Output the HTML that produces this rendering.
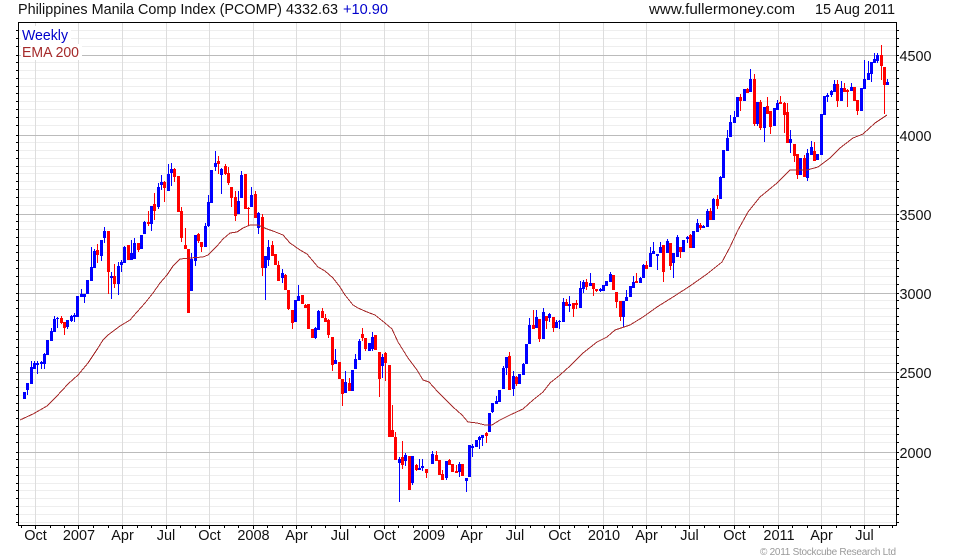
<!DOCTYPE html>
<html>
<head>
<meta charset="utf-8">
<style>
html,body{margin:0;padding:0;background:#fff;width:980px;height:560px;overflow:hidden}
svg{display:block}
text{font-family:"Liberation Sans",Arial,sans-serif;font-size:14.5px;fill:#111}
.c{shape-rendering:crispEdges;fill:none}
.m{text-anchor:middle}
</style>
</head>
<body>
<svg width="980" height="560" viewBox="0 0 980 560" xmlns="http://www.w3.org/2000/svg">
<rect width="980" height="560" fill="#fff"/>
<!-- minor grid -->
<path class="c" stroke="#eeeeee" d="M19 30.5H896M19 38.5H896M19 46.5H896M19 62.5H896M19 70.5H896M19 78.5H896M19 86.5H896M19 93.5H896M19 101.5H896M19 109.5H896M19 117.5H896M19 125.5H896M19 142.5H896M19 150.5H896M19 158.5H896M19 166.5H896M19 173.5H896M19 181.5H896M19 189.5H896M19 197.5H896M19 205.5H896M19 221.5H896M19 229.5H896M19 237.5H896M19 245.5H896M19 252.5H896M19 260.5H896M19 268.5H896M19 276.5H896M19 284.5H896M19 300.5H896M19 308.5H896M19 316.5H896M19 324.5H896M19 331.5H896M19 339.5H896M19 347.5H896M19 355.5H896M19 363.5H896M19 379.5H896M19 387.5H896M19 395.5H896M19 403.5H896M19 410.5H896M19 418.5H896M19 426.5H896M19 434.5H896M19 442.5H896M19 459.5H896M19 467.5H896M19 475.5H896M19 483.5H896M19 490.5H896M19 498.5H896M19 506.5H896M19 514.5H896M19 522.5H896"/>
<!-- vertical grid -->
<path class="c" stroke="#dddddd" d="M35.5 23V525M78.5 23V525M122.5 23V525M166.5 23V525M209.5 23V525M253.5 23V525M296.5 23V525M340.5 23V525M384.5 23V525M428.5 23V525M471.5 23V525M515.5 23V525M559.5 23V525M603.5 23V525M646.5 23V525M689.5 23V525M734.5 23V525M778.5 23V525M821.5 23V525M864.5 23V525"/>
<!-- major grid -->
<path class="c" stroke="#bbbbbb" d="M19 55.5H896M19 135.5H896M19 214.5H896M19 293.5H896M19 372.5H896M19 452.5H896"/>
<!-- legend backgrounds -->
<rect x="21" y="26" width="50" height="18" fill="#fff"/>
<rect x="21" y="44" width="61" height="16" fill="#fff"/>
<!-- blue candles -->
<path class="c" stroke="#0000ff" stroke-width="3" d="M24.5 392V399M27.5 383V390M31.5 367V384M34.5 363V369M37.5 363V365M41.5 362V364M44.5 354V364M47.5 340V355M51.5 331V341M54.5 319V332M57.5 318V319M67.5 320V327M71.5 316V321M74.5 315V317M77.5 296V317M81.5 294V297M84.5 294V297M87.5 280V294M91.5 267V281M94.5 251V268M101.5 240V256M104.5 231V238M111.5 276V278M118.5 266V284M121.5 262V265M124.5 247V263M131.5 253V260M134.5 243V259M141.5 235V249M144.5 222V234M151.5 206V224M158.5 187V207M161.5 182V185M168.5 174V191M171.5 169V173M191.5 259V291M195.5 235V261M205.5 226V247M208.5 202V226M211.5 170V203M215.5 163V167M221.5 169V175M238.5 201V214M241.5 175V198M251.5 195V207M258.5 213V228M265.5 256V268M268.5 247V260M282.5 273V278M295.5 300V322M298.5 296V301M315.5 328V338M318.5 311V330M335.5 360V364M345.5 382V393M352.5 370V391M355.5 359V369M359.5 341V360M369.5 343V351M372.5 337V349M382.5 357V366M399.5 459V463M405.5 455V461M412.5 456V483M419.5 468V470M422.5 466V468M432.5 454V464M446.5 461V478M459.5 464V472M466.5 478V481M469.5 445V477M472.5 446V448M476.5 440V447M479.5 437V440M482.5 435V438M489.5 413V432M492.5 403V412M496.5 401V404M499.5 390V402M503.5 368V389M506.5 357V368M513.5 376V389M519.5 374V384M523.5 364V375M526.5 344V364M529.5 325V344M536.5 317V328M543.5 312V339M549.5 314V318M556.5 322V328M559.5 321V322M563.5 302V322M569.5 304V306M580.5 288V308M583.5 282V289M590.5 283V286M600.5 289V291M603.5 285V291M606.5 281V286M610.5 274V282M623.5 301V317M626.5 297V301M630.5 286V297M633.5 282V288M640.5 278V283M643.5 265V278M650.5 253V267M653.5 251V254M657.5 254V256M660.5 247V253M667.5 241V253M673.5 253V263M677.5 237V257M683.5 240V252M687.5 237V239M693.5 231V248M697.5 223V232M703.5 226V228M707.5 211V227M713.5 199V220M720.5 177V199M723.5 150V178M727.5 138V151M730.5 122V137M734.5 117V123M737.5 97V117M744.5 89V101M750.5 79V92M757.5 102V124M764.5 107V128M774.5 108V126M777.5 103V110M790.5 139V143M800.5 158V175M807.5 153V178M811.5 147V155M817.5 154V160M821.5 114V155M824.5 96V115M827.5 95V97M831.5 91V95M834.5 84V92M841.5 88V101M851.5 87V91M861.5 88V111M864.5 79V89M868.5 73V80M871.5 62V74M874.5 59V63M877.5 55V61M887.5 82V85"/>
<path class="c" stroke="#0000ff" d="M27.5 386V395M31.5 361V384M34.5 361V369M37.5 361V374M41.5 361V369M44.5 353V369M51.5 328V341M54.5 316V332M57.5 317V328M67.5 320V329M71.5 315V322M74.5 313V322M81.5 289V297M84.5 294V303M91.5 247V281M94.5 249V268M101.5 240V261M104.5 227V243M111.5 272V299M118.5 262V295M121.5 260V272M124.5 246V263M131.5 240V260M134.5 238V259M144.5 221V234M151.5 206V231M158.5 183V209M161.5 175V190M168.5 164V191M171.5 163V186M191.5 253V291M195.5 235V266M205.5 223V247M208.5 195V227M215.5 151V171M221.5 168V194M238.5 191V214M241.5 171V198M251.5 187V207M258.5 212V234M265.5 256V300M268.5 240V266M282.5 269V283M298.5 285V301M315.5 327V339M318.5 310V330M335.5 349V364M345.5 371V393M355.5 354V369M359.5 339V360M372.5 332V351M382.5 354V378M399.5 457V502M405.5 453V466M412.5 456V485M419.5 459V470M422.5 459V471M432.5 451V464M446.5 461V480M459.5 462V477M466.5 478V492M472.5 444V457M479.5 436V449M482.5 435V446M492.5 403V413M496.5 396V404M503.5 366V389M506.5 357V375M513.5 371V396M523.5 363V375M529.5 318V344M536.5 310V328M543.5 308V339M549.5 313V322M556.5 320V328M559.5 320V329M563.5 298V322M569.5 296V312M580.5 281V308M583.5 280V293M590.5 273V286M600.5 288V292M610.5 272V282M623.5 301V327M626.5 290V301M633.5 276V288M640.5 277V283M643.5 264V278M650.5 247V267M653.5 242V254M657.5 254V270M660.5 242V253M667.5 239V253M673.5 253V278M677.5 235V257M687.5 236V243M697.5 219V232M703.5 225V228M707.5 209V227M713.5 198V220M720.5 176V199M727.5 130V151M730.5 115V137M734.5 111V123M750.5 69V92M757.5 102V126M764.5 107V142M777.5 100V110M790.5 130V153M807.5 149V181M811.5 141V155M827.5 93V102M831.5 90V97M834.5 80V92M841.5 81V101M851.5 83V91M864.5 60V89M868.5 61V80M871.5 62V82M874.5 53V63M877.5 53V63M887.5 79V85"/>
<!-- red candles -->
<path class="c" stroke="#ff0000" stroke-width="3" d="M61.5 318V323M64.5 322V328M97.5 250V255M108.5 231V272M114.5 276V284M128.5 245V260M138.5 243V250M148.5 222V224M154.5 204V211M164.5 182V188M174.5 169V177M178.5 176V212M181.5 211V238M185.5 245V249M188.5 249V313M198.5 234V241M201.5 242V247M218.5 161V164M225.5 166V174M228.5 173V183M231.5 187V198M235.5 197V216M245.5 174V209M248.5 208V209M255.5 194V218M262.5 217V268M272.5 245V256M275.5 254V265M278.5 265V281M285.5 275V290M288.5 290V309M292.5 310V323M302.5 295V304M305.5 305V308M308.5 304V329M312.5 329V338M322.5 311V318M325.5 318V322M328.5 320V335M332.5 337V365M339.5 362V379M342.5 379V394M349.5 383V391M362.5 334V338M365.5 338V349M375.5 335V350M379.5 352V379M385.5 353V363M389.5 365V437M392.5 430V437M395.5 437V460M402.5 457V465M409.5 456V490M416.5 465V470M426.5 469V473M436.5 455V461M439.5 460V475M442.5 474V480M449.5 460V465M452.5 464V472M456.5 471V473M462.5 464V476M486.5 433V436M509.5 356V390M516.5 377V384M533.5 325V329M539.5 319V339M546.5 316V321M553.5 317V328M566.5 302V306M573.5 303V309M576.5 303V305M586.5 282V287M593.5 283V289M596.5 289V291M613.5 275V290M616.5 292V302M620.5 301V317M636.5 281V283M646.5 265V269M663.5 245V272M670.5 243V266M680.5 247V252M690.5 235V248M700.5 225V228M710.5 211V220M717.5 199V206M740.5 97V101M747.5 89V93M754.5 79V124M760.5 102V128M767.5 106V114M770.5 111V127M780.5 102V104M784.5 103V115M787.5 112V143M794.5 144V156M797.5 154V175M804.5 158V177M814.5 151V161M837.5 84V101M844.5 88V92M847.5 90V92M854.5 87V101M857.5 100V111M881.5 55V66M884.5 67V85"/>
<path class="c" stroke="#ff0000" d="M61.5 316V324M64.5 322V335M97.5 244V263M108.5 231V294M114.5 264V288M138.5 243V252M148.5 211V226M154.5 193V220M164.5 181V202M174.5 168V182M181.5 207V242M185.5 228V249M198.5 233V243M201.5 242V252M218.5 156V174M225.5 164V175M228.5 167V185M231.5 187V207M235.5 191V221M248.5 207V226M255.5 191V218M262.5 214V276M272.5 241V256M278.5 261V281M285.5 274V290M288.5 290V310M292.5 310V329M305.5 304V308M322.5 308V318M325.5 314V322M328.5 319V338M332.5 337V371M342.5 379V406M349.5 378V391M362.5 328V341M365.5 338V351M379.5 352V397M385.5 352V381M392.5 405V437M395.5 432V460M402.5 441V469M416.5 464V471M426.5 469V478M436.5 451V461M442.5 470V480M449.5 459V465M456.5 465V473M486.5 432V443M509.5 352V390M516.5 376V386M533.5 310V329M539.5 319V342M546.5 316V329M553.5 317V332M566.5 299V306M573.5 303V317M576.5 300V309M586.5 279V290M593.5 283V296M596.5 289V292M616.5 292V308M620.5 301V321M636.5 273V283M646.5 261V269M663.5 245V282M670.5 243V270M680.5 247V258M690.5 234V248M700.5 223V230M710.5 208V220M717.5 195V209M740.5 94V111M747.5 88V93M754.5 74V126M760.5 100V130M767.5 97V114M770.5 111V134M780.5 96V104M784.5 102V133M787.5 103V143M794.5 144V162M797.5 154V179M804.5 155V177M814.5 142V161M837.5 80V107M844.5 83V92M847.5 89V107M857.5 100V115M881.5 45V80M884.5 67V114"/>
<!-- EMA -->
<polyline class="c" stroke="#a52a2a" stroke-width="1" points="20,420 33,414 47,406 56,397 68,384 78,375 88,363 98,348 103,340 108,335 120,326 130,320 137,312 145,303 153,293 160,283 167,275 173,266 180,259 190,258 203,257 208,255 217,246 223,239 230,233 237,232 243,228 250,225 258,225 267,229 273,231 283,235 290,243 300,250 307,254 318,267 325,271 333,278 340,287 345,295 353,305 358,308 367,312 375,315 385,323 392,329 398,342 408,358 417,370 423,380 429,382 438,392 453,407 462,415 468,422 477,423 485,425 492,425 500,420 510,415 523,409 533,400 543,392 550,383 560,375 570,366 583,353 597,342 607,337 615,330 630,325 643,317 657,307 673,297 690,286 707,274 722,262 730,247 738,230 748,212 760,197 777,183 790,170 807,170 818,167 830,158 840,148 853,138 863,134 875,123 887,115"/>
<!-- frame -->
<rect class="c" x="18.5" y="22.5" width="878" height="503" stroke="#000"/>
<!-- y ticks -->
<path class="c" stroke="#000" d="M16 30.5H18M16 38.5H18M16 46.5H18M16 55.5H18M16 62.5H18M16 70.5H18M16 78.5H18M16 86.5H18M16 93.5H18M16 101.5H18M16 109.5H18M16 117.5H18M16 125.5H18M16 135.5H18M16 142.5H18M16 150.5H18M16 158.5H18M16 166.5H18M16 173.5H18M16 181.5H18M16 189.5H18M16 197.5H18M16 205.5H18M16 214.5H18M16 221.5H18M16 229.5H18M16 237.5H18M16 245.5H18M16 252.5H18M16 260.5H18M16 268.5H18M16 276.5H18M16 284.5H18M16 293.5H18M16 300.5H18M16 308.5H18M16 316.5H18M16 324.5H18M16 331.5H18M16 339.5H18M16 347.5H18M16 355.5H18M16 363.5H18M16 372.5H18M16 379.5H18M16 387.5H18M16 395.5H18M16 403.5H18M16 410.5H18M16 418.5H18M16 426.5H18M16 434.5H18M16 442.5H18M16 452.5H18M16 459.5H18M16 467.5H18M16 475.5H18M16 483.5H18M16 490.5H18M16 498.5H18M16 506.5H18M16 514.5H18M16 522.5H18"/>
<path class="c" stroke="#000" d="M897 30.5H899M897 38.5H899M897 46.5H899M897 55.5H899M897 62.5H899M897 70.5H899M897 78.5H899M897 86.5H899M897 93.5H899M897 101.5H899M897 109.5H899M897 117.5H899M897 125.5H899M897 135.5H899M897 142.5H899M897 150.5H899M897 158.5H899M897 166.5H899M897 173.5H899M897 181.5H899M897 189.5H899M897 197.5H899M897 205.5H899M897 214.5H899M897 221.5H899M897 229.5H899M897 237.5H899M897 245.5H899M897 252.5H899M897 260.5H899M897 268.5H899M897 276.5H899M897 284.5H899M897 293.5H899M897 300.5H899M897 308.5H899M897 316.5H899M897 324.5H899M897 331.5H899M897 339.5H899M897 347.5H899M897 355.5H899M897 363.5H899M897 372.5H899M897 379.5H899M897 387.5H899M897 395.5H899M897 403.5H899M897 410.5H899M897 418.5H899M897 426.5H899M897 434.5H899M897 442.5H899M897 452.5H899M897 459.5H899M897 467.5H899M897 475.5H899M897 483.5H899M897 490.5H899M897 498.5H899M897 506.5H899M897 514.5H899M897 522.5H899"/>
<!-- x ticks -->
<path class="c" stroke="#000" d="M35.5 526V529M78.5 526V529M122.5 526V529M166.5 526V529M209.5 526V529M253.5 526V529M296.5 526V529M340.5 526V529M384.5 526V529M428.5 526V529M471.5 526V529M515.5 526V529M559.5 526V529M603.5 526V529M646.5 526V529M689.5 526V529M734.5 526V529M778.5 526V529M821.5 526V529M864.5 526V529M21.5 526V528M50.5 526V528M64.5 526V528M93.5 526V528M108.5 526V528M137.5 526V528M151.5 526V528M180.5 526V528M195.5 526V528M224.5 526V528M238.5 526V528M267.5 526V528M282.5 526V528M311.5 526V528M325.5 526V528M355.5 526V528M369.5 526V528M398.5 526V528M413.5 526V528M442.5 526V528M457.5 526V528M486.5 526V528M500.5 526V528M530.5 526V528M544.5 526V528M574.5 526V528M588.5 526V528M617.5 526V528M632.5 526V528M661.5 526V528M675.5 526V528M704.5 526V528M719.5 526V528M749.5 526V528M763.5 526V528M792.5 526V528M807.5 526V528M836.5 526V528M850.5 526V528M879.5 526V528M892.5 526V528"/>
<!-- header text -->
<text x="18" y="14" textLength="320" lengthAdjust="spacingAndGlyphs">Philippines Manila Comp Index (PCOMP) 4332.63</text>
<text x="343" y="14" textLength="45" lengthAdjust="spacingAndGlyphs" style="fill:#0000cc">+10.90</text>
<text x="649" y="14" textLength="146" lengthAdjust="spacingAndGlyphs">www.fullermoney.com</text>
<text x="815" y="14" textLength="80" lengthAdjust="spacingAndGlyphs">15 Aug 2011</text>
<!-- legend -->
<text x="22" y="40" textLength="46" lengthAdjust="spacingAndGlyphs" style="fill:#0000cc">Weekly</text>
<text x="22" y="57" textLength="57" lengthAdjust="spacingAndGlyphs" style="fill:#a52a2a">EMA 200</text>
<!-- y labels -->
<text x="899.5" y="61" textLength="32" lengthAdjust="spacingAndGlyphs">4500</text>
<text x="899.5" y="141" textLength="32" lengthAdjust="spacingAndGlyphs">4000</text>
<text x="899.5" y="220" textLength="32" lengthAdjust="spacingAndGlyphs">3500</text>
<text x="899.5" y="299" textLength="32" lengthAdjust="spacingAndGlyphs">3000</text>
<text x="899.5" y="378" textLength="32" lengthAdjust="spacingAndGlyphs">2500</text>
<text x="899.5" y="458" textLength="32" lengthAdjust="spacingAndGlyphs">2000</text>
<!-- x labels -->
<text class="m" x="35.5" y="540">Oct</text>
<text class="m" x="79" y="540">2007</text>
<text class="m" x="122.5" y="540">Apr</text>
<text class="m" x="166" y="540">Jul</text>
<text class="m" x="209.5" y="540">Oct</text>
<text class="m" x="253.5" y="540">2008</text>
<text class="m" x="296.5" y="540">Apr</text>
<text class="m" x="340" y="540">Jul</text>
<text class="m" x="384.5" y="540">Oct</text>
<text class="m" x="429" y="540">2009</text>
<text class="m" x="471.5" y="540">Apr</text>
<text class="m" x="515" y="540">Jul</text>
<text class="m" x="559.5" y="540">Oct</text>
<text class="m" x="604" y="540">2010</text>
<text class="m" x="646.5" y="540">Apr</text>
<text class="m" x="689.5" y="540">Jul</text>
<text class="m" x="734.5" y="540">Oct</text>
<text class="m" x="779" y="540">2011</text>
<text class="m" x="821.5" y="540">Apr</text>
<text class="m" x="864.5" y="540">Jul</text>
<text x="760" y="555" textLength="136" lengthAdjust="spacing" style="font-size:10px;fill:#999">© 2011 Stockcube Research Ltd</text>
</svg>
</body>
</html>
